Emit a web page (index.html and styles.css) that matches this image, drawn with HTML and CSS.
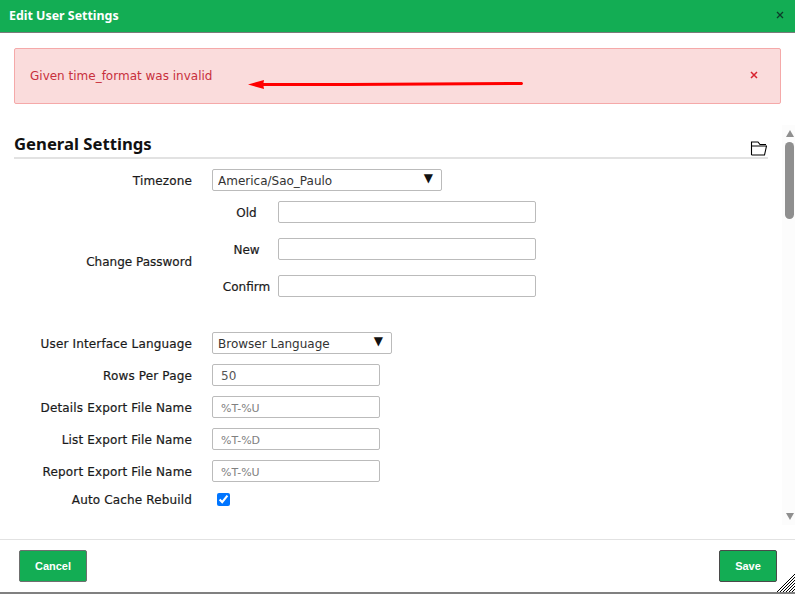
FILE: index.html
```html
<!DOCTYPE html>
<html lang="en">
<head>
    <meta charset="UTF-8">
    <meta name="viewport" content="width=device-width, initial-scale=1.0">
    <title>Edit User Settings</title>
    <link rel="stylesheet" href="styles.css">
</head>
<body>
    <div class="dialog">
        <div class="titlebar">
            <span class="title">Edit User Settings</span>
            <svg class="close" width="8" height="8" viewBox="0 0 8 8">
                <path d="M1 1 L7 7 M7 1 L1 7" stroke="#0d3b2a" stroke-width="1.3" fill="none"/>
            </svg>
        </div>

        <div class="alert">
            <span class="alert-text">Given time_format was invalid</span>
            <svg class="alert-close" width="8" height="8" viewBox="0 0 8 8">
                <path d="M1 1 L7 7 M7 1 L1 7" stroke="#d8232f" stroke-width="1.5" fill="none"/>
            </svg>
            <!-- red arrow somebody drew on top of the screenshot -->
            <svg class="arrow" width="290" height="16" viewBox="0 0 290 16">
                <path d="M0 7.5 L16 3 L15.5 6 L100 6 L274 5 Q276 6.5 274 8 L100 9 L15.5 9 L16 12 Z" fill="#ff0000"/>
            </svg>
        </div>

        <div class="body">
            <div class="content">
                <div class="section-head">
                    <h2>General Settings</h2>
                    <svg class="folder" width="17" height="15" viewBox="0 0 17 15">
                        <path d="M1.5 14 V1 H8 L10 3.5 H16 M1.5 5 H16.5 L14.5 14 H1.5" fill="none" stroke="#000" stroke-width="1.1"/>
                    </svg>
                </div>

                <div class="rows">
                    <div class="row">
                        <label>Timezone</label>
                        <div class="select tz">
                            <select><option>America/Sao_Paulo</option></select>
                        </div>
                    </div>

                    <div class="row">
                        <label class="pw-label">Change Password</label>
                        <div class="pw">
                            <div class="pw-line"><span>Old</span><input type="password"></div>
                            <div class="pw-line"><span>New</span><input type="password"></div>
                            <div class="pw-line"><span>Confirm</span><input type="password"></div>
                        </div>
                    </div>

                    <div class="row">
                        <label>User Interface Language</label>
                        <div class="select lang">
                            <select><option>Browser Language</option></select>
                        </div>
                    </div>
                    <div class="row">
                        <label>Rows Per Page</label>
                        <input class="text" type="text" value="50">
                    </div>
                    <div class="row">
                        <label>Details Export File Name</label>
                        <input class="text" type="text" placeholder="%T-%U">
                    </div>
                    <div class="row">
                        <label>List Export File Name</label>
                        <input class="text" type="text" placeholder="%T-%D">
                    </div>
                    <div class="row">
                        <label>Report Export File Name</label>
                        <input class="text" type="text" placeholder="%T-%U">
                    </div>
                    <div class="row check-row">
                        <label>Auto Cache Rebuild</label>
                        <input class="check" type="checkbox" checked>
                    </div>
                </div>
            </div>

            <div class="scrollbar">
                <span class="up"></span>
                <span class="track"><span class="thumb"></span></span>
                <span class="down"></span>
            </div>
        </div>

        <div class="footer">
            <button class="btn">Cancel</button>
            <button class="btn">Save</button>
        </div>

        <svg class="grip" width="18" height="18" viewBox="0 0 18 18">
            <path d="M0 18 L18 0 M3 18 L18 3 M6 18 L18 6 M9 18 L18 9 M12 18 L18 12 M15 18 L18 15" stroke="#000" stroke-width="1" fill="none"/>
        </svg>
    </div>
</body>
</html>
```

FILE: styles.css
```css
* {
    margin: 0;
    padding: 0;
    box-sizing: border-box;
}
html, body {
    height: 100%;
    overflow: hidden;
}
body {
    background-color: white;
    color: #1a1a1a;
    font-family: "DejaVu Sans", sans-serif;
    font-size: 12px;
}
.dialog {
    position: relative;
    height: 594px;
    display: flex;
    flex-direction: column;
    border-bottom: 2px solid #808080;
}
.titlebar {
    height: 33px;
    flex: none;
    display: flex;
    justify-content: space-between;
    align-items: center;
    padding: 0 11px 2px 9px;
    background-color: #13ad54;
    border-bottom: 1px solid #7a7a7a;
}
.title {
    color: white;
    font-family: "Noto Sans", sans-serif;
    font-size: 12.4px;
    font-weight: bold;
}
.alert {
    position: relative;
    height: 56px;
    flex: none;
    margin: 15px 14px 0;
    padding: 0 22px 0 15px;
    display: flex;
    justify-content: space-between;
    align-items: center;
    background-color: #fadcdc;
    border: 1px solid #f5a9a9;
    border-radius: 2px;
    color: #c8303c;
}
.alert-close {
    margin-bottom: 2px;
}
.arrow {
    position: absolute;
    left: 233px;
    top: 28px;
}
.body {
    flex: 1;
    min-height: 0;
    display: flex;
    padding-top: 21px;
    border-bottom: 1px solid #e2e2e2;
}
.content {
    width: 782px;
    flex: none;
    padding-left: 14px;
}
.section-head {
    width: 754px;
    height: 34px;
    display: flex;
    justify-content: space-between;
    align-items: flex-end;
    border-bottom: 2px solid #e2e2e2;
}
h2 {
    padding-top: 2px;
    font-family: "Noto Sans", sans-serif;
    font-size: 16.7px;
    font-weight: bold;
    line-height: 26px;
    color: #111;
}
.folder {
    margin: 0 1px 1px 0;
}
.rows {
    margin-top: 10px;
    display: flex;
    flex-direction: column;
    gap: 10px;
}
.row {
    display: flex;
    align-items: center;
    gap: 20px;
}
.row label {
    width: 178px;
    flex: none;
    padding-top: 2px;
    text-align: right;
    letter-spacing: 0.15px;
    -webkit-text-stroke: 0.2px #1a1a1a;
}
.row .pw-label {
    padding-top: 0;
    letter-spacing: 0;
}
.pw {
    width: 324px;
    padding-bottom: 25px;
    display: flex;
    flex-direction: column;
    gap: 15px;
}
.pw-line {
    display: flex;
    align-items: center;
    justify-content: space-between;
}
.pw-line span {
    width: 49px;
    margin-left: 10px;
    padding-top: 1px;
    text-align: center;
    -webkit-text-stroke: 0.2px #1a1a1a;
}
.pw-line input {
    width: 258px;
}
input, select {
    height: 22px;
    border: 1px solid #bbbbbb;
    border-radius: 2px;
    background-color: white;
    font-family: "DejaVu Sans", sans-serif;
    font-size: 12px;
    color: #333;
}
.text {
    width: 168px;
    padding: 1px 9px 0 8px;
    color: #555;
}
.text::placeholder {
    font-size: 11px;
    color: #808080;
}
.select {
    position: relative;
}
.select select {
    width: 100%;
    padding: 1px 0 0 5px;
    appearance: none;
}
.select::after {
    content: "\25BC";
    position: absolute;
    right: 9px;
    top: 2px;
    font-size: 12px;
    color: #111;
}
.tz {
    width: 230px;
}
.lang {
    width: 180px;
}
.check-row {
    gap: 25px;
    height: 14px;
}
.check {
    width: 13px;
    height: 13px;
    accent-color: #0075ff;
}
.scrollbar {
    width: 13px;
    height: 400px;
    padding-right: 1px;
    display: flex;
    flex-direction: column;
    align-items: flex-end;
    background-color: #fcfcfc;
}
.up, .down {
    width: 0;
    height: 0;
    flex: none;
    border-left: 4.5px solid transparent;
    border-right: 4.5px solid transparent;
}
.up {
    margin-top: 5px;
    border-bottom: 7px solid #8f8f8f;
}
.down {
    margin-bottom: 5px;
    border-top: 7px solid #8f8f8f;
}
.track {
    flex: 1;
    padding-top: 5px;
}
.thumb {
    display: block;
    width: 9px;
    height: 77px;
    border-radius: 5px;
    background-color: #8f8f8f;
}
.footer {
    height: 52px;
    flex: none;
    display: flex;
    justify-content: space-between;
    align-items: flex-start;
    padding: 10px 18px 0 19px;
}
.btn {
    width: 68px;
    height: 32px;
    background-color: #13ad54;
    border: 1px solid #6f6f6f;
    border-radius: 2px;
    color: white;
    font-family: "Liberation Sans", sans-serif;
    font-size: 11px;
    font-weight: bold;
}
.footer .btn:last-child {
    width: 58px;
    border-color: #4a4a4a;
}
.grip {
    position: absolute;
    right: 0;
    bottom: 0;
}
```
